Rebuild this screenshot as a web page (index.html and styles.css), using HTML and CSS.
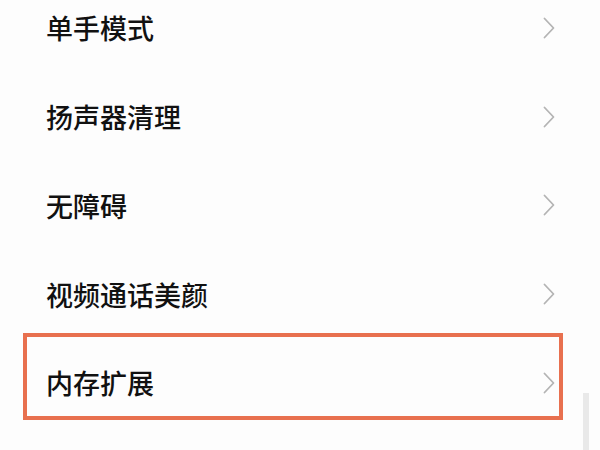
FILE: index.html
```html
<!DOCTYPE html>
<html lang="zh-CN">
<head>
<meta charset="utf-8">
<link rel="stylesheet" href="styles.css">
</head>
<body>
<div class="screen">
  <ul class="menu">
    <li class="item"><span class="label">单手模式</span><svg class="chev" viewBox="0 0 12 22" width="12" height="22"><polyline points="1.5,1.5 10.5,11 1.5,20.5"/></svg></li>
    <li class="item"><span class="label">扬声器清理</span><svg class="chev" viewBox="0 0 12 22" width="12" height="22"><polyline points="1.5,1.5 10.5,11 1.5,20.5"/></svg></li>
    <li class="item"><span class="label">无障碍</span><svg class="chev" viewBox="0 0 12 22" width="12" height="22"><polyline points="1.5,1.5 10.5,11 1.5,20.5"/></svg></li>
    <li class="item"><span class="label">视频通话美颜</span><svg class="chev" viewBox="0 0 12 22" width="12" height="22"><polyline points="1.5,1.5 10.5,11 1.5,20.5"/></svg></li>
    <li class="item highlighted"><span class="label">内存扩展</span><svg class="chev" viewBox="0 0 12 22" width="12" height="22"><polyline points="1.5,1.5 10.5,11 1.5,20.5"/></svg></li>
  </ul>
  <div class="scrollbar"></div>
</div>
</body>
</html>
```

FILE: styles.css
```css
html, body {
  margin: 0;
  padding: 0;
  background: #fdfdfd;
}
.screen {
  position: relative;
  width: 600px;
  height: 450px;
  overflow: hidden;
  font-family: "Noto Sans CJK SC", "Noto Sans", sans-serif;
}
.menu {
  list-style: none;
  margin: -16.4px 0 0 0;
  padding: 0;
}
.item {
  position: relative;
  height: 88.75px;
  display: flex;
  align-items: center;
  justify-content: space-between;
  padding: 0 45px 0 46px;
}
.label {
  font-size: 27px;
  font-weight: 500;
  line-height: 1;
  color: #111111;
  letter-spacing: 0;
}
.chev {
  display: block;
  fill: none;
  stroke: #b4b4b4;
  stroke-width: 1.8;
  stroke-linecap: round;
  stroke-linejoin: round;
}
.highlighted::after {
  content: "";
  position: absolute;
  left: 23px;
  top: -5.6px;
  width: 532px;
  height: 79px;
  border: 4px solid #e8704f;
  pointer-events: none;
}
.scrollbar {
  position: absolute;
  left: 583px;
  top: 393px;
  width: 6px;
  height: 60px;
  background: #e9e9e9;
}
```
